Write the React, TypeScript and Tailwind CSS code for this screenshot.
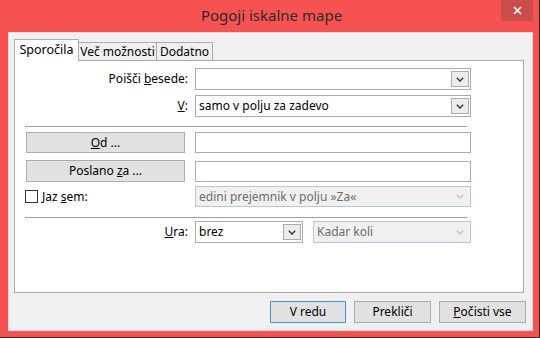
import React from "react";

const F = { fontFamily: '"Noto Sans", "Open Sans", sans-serif' };

function Chevron({ light }: { light?: boolean }) {
  return (
    <svg width="8" height="5" viewBox="0 0 8 5">
      <path d="M0.8 0.8 L4 4 L7.2 0.8" fill="none" stroke={light ? "#c4c4c4" : "#3c3c3c"} strokeWidth="1.5" />
    </svg>
  );
}

function Combo({ text, w, disabled, h = "h-[22px]" }: { text?: string; w: string; disabled?: boolean; h?: string }) {
  return (
    <div
      className={`${w} ${h} flex items-stretch border py-[2px] pr-[1px] ${
        disabled ? "bg-[#f0f0f0] border-[#b2c7e0]" : "bg-white border-[#acacac]"
      }`}
    >
      <div className={`flex-1 flex items-center pl-[3px] ${disabled ? "text-[#6d6d6d]" : "text-black"}`}>{text}</div>
      <div
        className={`w-[18px] flex items-center justify-center border ${
          disabled ? "border-transparent" : "border-[#acacac] bg-[#ececec]"
        }`}
      >
        <Chevron light={disabled} />
      </div>
    </div>
  );
}

function Btn({ children, w, focus }: { children: React.ReactNode; w: string; focus?: boolean }) {
  return (
    <div
      className={`${w} h-full flex items-center justify-center bg-[#e1e1e1] border ${
        focus ? "border-[#3c94e8]" : "border-[#adadad]"
      }`}
    >
      <span>{children}</span>
    </div>
  );
}

function Sep() {
  return <div className="ml-[10px] w-[442px] h-[2px] border-t border-[#a0a0a0] border-b border-b-white" />;
}

export default function App() {
  return (
    <div
      style={F}
      className="w-[540px] h-[338px] bg-[#f65252] border-r border-b border-[#2a2a2a] flex flex-col pl-[8px] pr-[6px] pb-[6px] text-[12px] text-black leading-none"
    >
      <div className="h-[32px] relative flex items-center justify-center">
        <span className="text-[15px] text-[#2b2b2b] -mt-[2px] pl-[2px]">Pogoji iskalne mape</span>
        <div className="absolute right-0 top-0 w-[32px] h-[21px] bg-[#cc4c4c] flex items-center justify-center">
          <svg width="9" height="9" viewBox="0 0 9 9">
            <path d="M1 1 L8 8 M8 1 L1 8" stroke="white" strokeWidth="1.6" />
          </svg>
        </div>
      </div>
      <div className="flex-1 bg-[#f0f0f0] border border-[#dcdcdc] flex flex-col pt-[6px] pl-[5px]">
        <div className="h-[21px] flex items-end">
          <div className="h-[22px] -mb-[1px] relative z-10 bg-white border border-b-0 border-[#acacac] w-[65px] flex items-center justify-center text-[12.5px]">
            Sporočila
          </div>
          <div className="h-[18px] bg-[#f0f0f0] border border-l-0 border-b-0 border-[#acacac] w-[78px] flex items-center justify-center">
            Več možnosti
          </div>
          <div className="h-[18px] bg-[#f0f0f0] border border-l-0 border-b-0 border-[#acacac] w-[56px] flex items-center justify-center">
            Dodatno
          </div>
        </div>
        <div className="w-[510px] h-[233px] bg-white border border-[#acacac] flex flex-col">
          <div className="mt-[7px] flex items-center">
            <div className="w-[180px] pr-[7px] text-right">
              Poišči <span className="underline">b</span>esede:
            </div>
            <Combo w="w-[276px]" />
          </div>
          <div className="mt-[5px] flex items-center">
            <div className="w-[180px] pr-[7px] text-right">
              <span className="underline">V</span>:
            </div>
            <Combo w="w-[276px]" text="samo v polju za zadevo" />
          </div>
          <div className="mt-[9px]">
            <Sep />
          </div>
          <div className="mt-[4px] flex items-center h-[21px]">
            <div className="w-[180px] h-full pl-[11px]">
              <Btn w="w-[159px]">
                <span className="underline">O</span>d ...
              </Btn>
            </div>
            <div className="w-[276px] h-[21px] bg-white border border-[#acacac]" />
          </div>
          <div className="mt-[7px] flex items-center h-[22px]">
            <div className="w-[180px] h-full pl-[11px]">
              <Btn w="w-[159px]">
                Poslano <span className="underline">z</span>a ...
              </Btn>
            </div>
            <div className="w-[276px] h-[21px] bg-white border border-[#acacac]" />
          </div>
          <div className="mt-[4px] flex items-center">
            <div className="w-[180px] pl-[10px] flex items-center">
              <div className="w-[13px] h-[13px] bg-white border border-[#333333]" />
              <span className="ml-[4px]">
                Jaz <span className="underline">s</span>em:
              </span>
            </div>
            <Combo w="w-[276px]" h="h-[21px]" disabled text="edini prejemnik v polju »Za«" />
          </div>
          <div className="mt-[10px]">
            <Sep />
          </div>
          <div className="mt-[2px] flex items-center">
            <div className="w-[180px] pr-[7px] text-right">
              <span className="underline">U</span>ra:
            </div>
            <Combo w="w-[108px]" text="brez" />
            <div className="ml-[10px]">
              <Combo w="w-[158px]" disabled text="Kadar koli" />
            </div>
          </div>
        </div>
        <div className="mt-[8px] h-[22px] flex justify-end pr-[6px] gap-[8px]">
          <Btn w="w-[76px]" focus>
            V redu
          </Btn>
          <Btn w="w-[77px]">Prekliči</Btn>
          <Btn w="w-[87px]">
            <span className="underline">P</span>očisti vse
          </Btn>
        </div>
      </div>
    </div>
  );
}
